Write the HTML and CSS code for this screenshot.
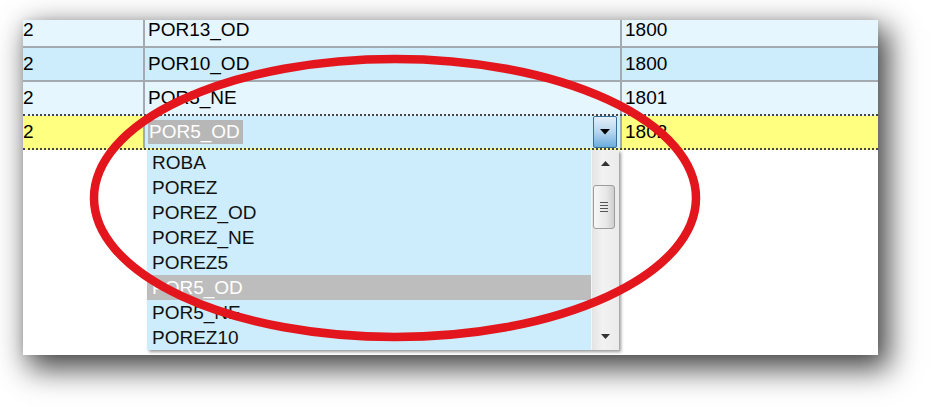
FILE: index.html
```html
<!DOCTYPE html>
<html lang="en">
<head>
    <meta charset="UTF-8">
    <title>Combo u mreži</title>
    <link rel="stylesheet" href="styles.css">
</head>
<body>

    <div class="page">
    <div class="shot">
        <div class="grid">
            <div class="row light">
                <div class="cell c1">2</div>
                <div class="cell c2">POR13_OD</div>
                <div class="cell c3">1800</div>
            </div>
            <div class="row dark">
                <div class="cell c1">2</div>
                <div class="cell c2">POR10_OD</div>
                <div class="cell c3">1800</div>
            </div>
            <div class="row light before-current">
                <div class="cell c1">2</div>
                <div class="cell c2">POR5_NE</div>
                <div class="cell c3">1801</div>
            </div>
            <div class="row current">
                <div class="cell c1">2</div>
                <div class="cell c2 editor">
                    <span class="sel">POR5_OD</span>
                    <span class="drop-btn">
                        <svg width="10" height="6" viewBox="0 0 10 6"><polygon points="0,0 10,0 5,5.5" fill="#000"/></svg>
                    </span>
                </div>
                <div class="cell c3">1802</div>
            </div>
        </div>

        <div class="dropdown">
            <ul class="items">
                <li>ROBA</li>
                <li>POREZ</li>
                <li>POREZ_OD</li>
                <li>POREZ_NE</li>
                <li>POREZ5</li>
                <li class="active">POR5_OD</li>
                <li>POR5_NE</li>
                <li>POREZ10</li>
            </ul>
            <div class="scrollbar">
                <div class="arrow">
                    <svg width="9" height="5" viewBox="0 0 9 5"><polygon points="0,5 9,5 4.5,0" fill="#333"/></svg>
                </div>
                <div class="track">
                    <div class="thumb">
                        <span class="grip"></span>
                    </div>
                </div>
                <div class="arrow">
                    <svg width="9" height="5" viewBox="0 0 9 5"><polygon points="0,0 9,0 4.5,5" fill="#333"/></svg>
                </div>
            </div>
        </div>

        <!-- crveni krug preko slike -->
        <svg class="mark" width="855" height="335" viewBox="0 0 855 335">
            <ellipse cx="372" cy="178" rx="301" ry="139" fill="none" stroke="#e3161d" stroke-width="8.5"/>
        </svg>
    </div>
    </div>

</body>
</html>
```

FILE: styles.css
```css
body {
    margin: 0;
    background-color: white;
    font-family: "Liberation Sans", Arial, sans-serif;
}

.page {
    height: 407px;
    padding: 20px 0 0 23px;
    box-sizing: border-box;
    overflow: hidden;
}

.shot {
    position: relative;
    width: 855px;
    height: 335px;
    overflow: hidden;
    background-color: white;
    box-shadow: 8px 11px 28px 3px rgba(0, 0, 0, 0.72), 0 0 8px rgba(0, 0, 0, 0.08);
}

.grid {
    margin-top: -6px;
}

.row {
    display: flex;
    height: 34px;
    box-sizing: border-box;
    border-bottom: 2px solid #a3abb0;
    font-size: 19px;
    color: #000;
}
.row.light {
    background-color: #e6f6fe;
}
.row.dark {
    background-color: #cdecfc;
}
.row.before-current {
    border-bottom: 2px dotted #444;
}
.row.current {
    background-color: #ffff80;
    border-bottom: 2px dotted #444;
}

.cell {
    line-height: 32px;
    white-space: nowrap;
}
.c1 {
    width: 120px;
    border-right: 2px solid #a3abb0;
}
.c2 {
    width: 472px;
    padding-left: 3px;
    border-right: 2px solid #a3abb0;
}
.c3 {
    flex: 1;
    padding-left: 3px;
}

.editor {
    display: flex;
    align-items: center;
    background-color: #cdecfc;
    width: 472px;
}
.sel {
    background-color: #b7b7b7;
    color: white;
    padding: 0 3px 0 1px;
    line-height: 24px;
}
.drop-btn {
    margin-left: auto;
    margin-right: 3px;
    width: 22px;
    height: 30px;
    border: 1px solid #3a6f98;
    border-radius: 2px;
    background: linear-gradient(#e4eff8, #b6d6ee 50%, #6aaddc);
    display: flex;
    align-items: center;
    justify-content: center;
}

.dropdown {
    display: flex;
    margin-left: 124px;
    width: 472px;
    height: 200px;
    box-shadow: 2px 2px 3px rgba(0, 0, 0, 0.4);
}
.items {
    list-style: none;
    margin: 0;
    padding: 0;
    flex: 1;
    background-color: #cdecfc;
    font-size: 19px;
    color: #111;
}
.items li {
    height: 25px;
    line-height: 25px;
    padding-left: 5px;
}
.items li.active {
    background-color: #bdbdbd;
    color: white;
}

.scrollbar {
    width: 27px;
    display: flex;
    flex-direction: column;
    background: linear-gradient(90deg, #e4e4e4, #f2f2f2 40%, #ebebeb);
    border-left: 1px solid #f4f4f4;
}
.arrow {
    height: 27px;
    display: flex;
    align-items: center;
    justify-content: center;
}
.track {
    flex: 1;
    padding-top: 8px;
}
.thumb {
    margin-left: 1px;
    width: 20px;
    height: 42px;
    border: 1px solid #9c9c9c;
    border-radius: 3px;
    background: linear-gradient(90deg, #f7f7f7, #e8e8e8 60%, #cfcfcf);
    display: flex;
    align-items: center;
    justify-content: center;
}
.grip {
    width: 8px;
    height: 10px;
    background: repeating-linear-gradient(#555 0, #555 1px, transparent 1px, transparent 3px);
}

.mark {
    position: absolute;
    left: 0;
    top: 0;
    pointer-events: none;
}
```
